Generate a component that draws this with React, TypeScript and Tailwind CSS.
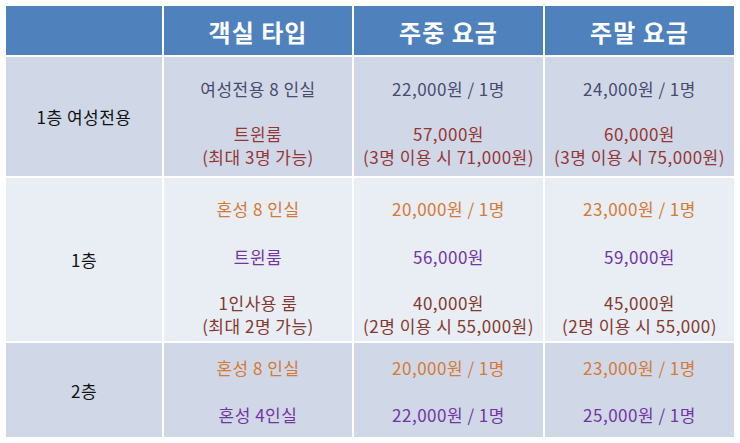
const slate = "text-[#4a4a6e]";
const red = "text-[#943634]";
const brown = "text-[#83392f]";
const orange = "text-[#d47a35]";
const purple = "text-[#7434a2]";

type Line = { text: string[]; color: string };

type Row = {
  floor: string;
  bg: string;
  pad: string;
  gaps: string[];
  types: Line[];
  weekday: Line[];
  weekend: Line[];
};

const rows: Row[] = [
  {
    floor: "1층 여성전용",
    bg: "bg-[#d0d8e8]",
    pad: "pt-[20px]",
    gaps: ["mt-[22px]"],
    types: [
      { text: ["여성전용 8 인실"], color: slate },
      { text: ["트윈룸", "(최대 3명 가능)"], color: red },
    ],
    weekday: [
      { text: ["22,000원 / 1명"], color: slate },
      { text: ["57,000원", "(3명 이용 시 71,000원)"], color: red },
    ],
    weekend: [
      { text: ["24,000원 / 1명"], color: slate },
      { text: ["60,000원", "(3명 이용 시 75,000원)"], color: red },
    ],
  },
  {
    floor: "1층",
    bg: "bg-[#e9edf4]",
    pad: "pt-[19px]",
    gaps: ["mt-[25px]", "mt-[23px]"],
    types: [
      { text: ["혼성 8 인실"], color: orange },
      { text: ["트윈룸"], color: purple },
      { text: ["1인사용 룸", "(최대 2명 가능)"], color: brown },
    ],
    weekday: [
      { text: ["20,000원 / 1명"], color: orange },
      { text: ["56,000원"], color: purple },
      { text: ["40,000원", "(2명 이용 시 55,000원)"], color: brown },
    ],
    weekend: [
      { text: ["23,000원 / 1명"], color: orange },
      { text: ["59,000원"], color: purple },
      { text: ["45,000원", "(2명 이용 시 55,000)"], color: brown },
    ],
  },
  {
    floor: "2층",
    bg: "bg-[#d0d8e8]",
    pad: "pt-[13px]",
    gaps: ["mt-[24px]"],
    types: [
      { text: ["혼성 8 인실"], color: orange },
      { text: ["혼성 4인실"], color: purple },
    ],
    weekday: [
      { text: ["20,000원 / 1명"], color: orange },
      { text: ["22,000원 / 1명"], color: purple },
    ],
    weekend: [
      { text: ["23,000원 / 1명"], color: orange },
      { text: ["25,000원 / 1명"], color: purple },
    ],
  },
];

function Cell({ row, lines }: { row: Row; lines: Line[] }) {
  return (
    <div className={`${row.bg} ${row.pad} flex flex-col items-center`}>
      {lines.map((line, i) => (
        <div key={i} className={`${line.color} ${i > 0 ? row.gaps[i - 1] : ""} text-center`}>
          {line.text.map((t) => (
            <div key={t} className="whitespace-nowrap">
              {t}
            </div>
          ))}
        </div>
      ))}
    </div>
  );
}

export default function App() {
  return (
    <div className="w-[740px] h-[443px] bg-white pt-[6px] pl-[6px] font-['Malgun_Gothic','Noto_Sans_CJK_KR',sans-serif] text-[17px] leading-[23px] tracking-[0.5px]">
      <div className="grid w-[728px] grid-cols-[156px_188px_189px_189px] grid-rows-[49px_119px_163px_94px] gap-[2px] bg-white">
        <div className="bg-[#4f81bd]" />
        {["객실 타입", "주중 요금", "주말 요금"].map((h) => (
          <div
            key={h}
            className="bg-[#4f81bd] flex items-center justify-center text-white text-[24px] tracking-[1px] font-bold pt-[2px]"
          >
            {h}
          </div>
        ))}
        {rows.map((row) => (
          <div key={row.floor} className="contents">
            <div className={`${row.bg} flex items-center justify-center text-[#111]`}>
              {row.floor}
            </div>
            <Cell row={row} lines={row.types} />
            <Cell row={row} lines={row.weekday} />
            <Cell row={row} lines={row.weekend} />
          </div>
        ))}
      </div>
    </div>
  );
}
